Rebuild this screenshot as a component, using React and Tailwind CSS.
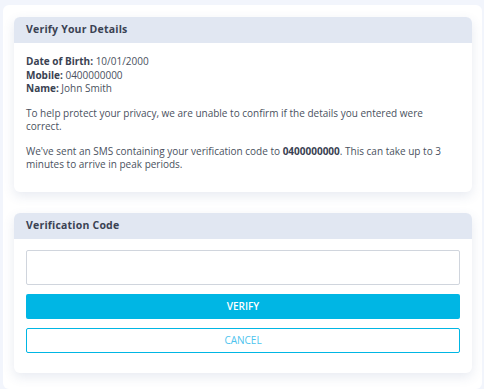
import React from 'react';

const font = { fontFamily: '"Open Sans", "Noto Sans", sans-serif' };

function Card({ title, children, className = '' }) {
    return (
        <div className={`bg-white rounded-md shadow-[0_4px_12px_rgba(60,80,140,0.12)] ${className}`}>
            <div className="h-[26px] bg-[#e1e7f2] rounded-t-md px-3 flex items-center">
                <h2 className="text-[10.5px] font-bold text-[#3a4252] tracking-[0.2px]">{title}</h2>
            </div>
            {children}
        </div>
    );
}

export default function App() {
    return (
        <div className="w-[484px] h-[389px] bg-[#f2f5fc] pt-[5px] pl-[3px] pr-[2px] overflow-hidden" style={font}>
            <div className="bg-white rounded-md h-full pl-[11px] pr-[10px] pt-[12px]">
                <Card title="Verify Your Details">
                    <div className="px-3 pt-[12px] pb-[20px] text-[10px] leading-[13.5px] text-[#4a5160]">
                        <p><strong className="font-bold text-[#3a4252]">Date of Birth:</strong> 10/01/2000</p>
                        <p><strong className="font-bold text-[#3a4252]">Mobile:</strong> 0400000000</p>
                        <p><strong className="font-bold text-[#3a4252]">Name:</strong> John Smith</p>
                        <p className="mt-[11px]">
                            To help protect your privacy, we are unable to confirm if the details you entered were correct.
                        </p>
                        <p className="mt-[11px]">
                            We've sent an SMS containing your verification code to <strong className="font-bold text-[#3a4252]">0400000000</strong>. This can take up to 3 minutes to arrive in peak periods.
                        </p>
                    </div>
                </Card>

                <Card title="Verification Code" className="mt-[21px]">
                    <div className="px-3 pt-[11px] pb-[20px] flex flex-col">
                        <input
                            type="text"
                            className="h-[35px] w-full border border-solid border-[#d0d5dd] rounded-[2px] outline-none px-2 text-[11px]"
                        />
                        <button
                            type="button"
                            className="mt-[9px] h-[25px] w-full bg-[#00b6e4] rounded-[2px] text-white text-[10px] font-semibold"
                        >
                            VERIFY
                        </button>
                        <button
                            type="button"
                            className="mt-[9px] h-[25px] w-full border border-solid border-[#00b6e4] rounded-[2px] text-[#4dc3ee] text-[10px]"
                        >
                            CANCEL
                        </button>
                    </div>
                </Card>
            </div>
        </div>
    );
}
